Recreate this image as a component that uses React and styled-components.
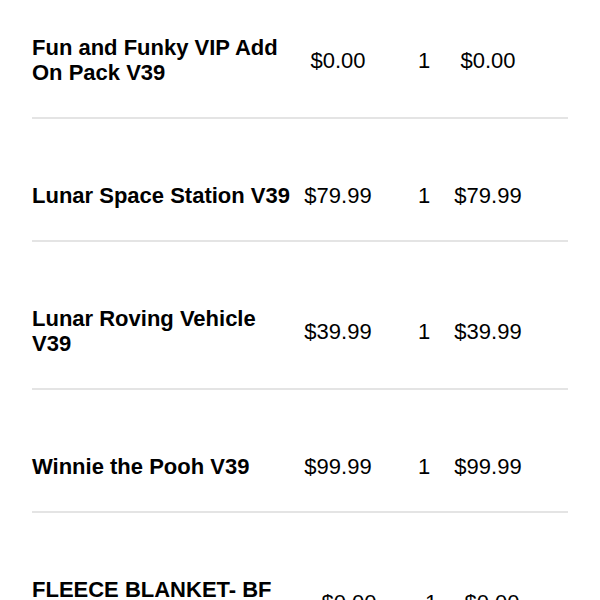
import React from 'react';
import styled, { createGlobalStyle } from 'styled-components';

const GlobalStyle = createGlobalStyle`
  html, body {
    margin: 0;
    padding: 0;
    background: #ffffff;
  }
  body {
    font-family: "Liberation Sans", Arial, Helvetica, sans-serif;
    color: #000000;
  }
`;

const List = styled.div`
  padding: 0 32px;
  overflow: hidden;
  height: 600px;
`;

const Row = styled.div`
  display: grid;
  grid-template-columns: ${(p) => p.$cols};
  align-items: center;
  padding: 64px 0 32px;
  border-bottom: 2px solid #e4e4e4;

  &:first-child {
    padding-top: 35px;
  }
`;

const Name = styled.div`
  font-size: 22px;
  font-weight: 700;
  line-height: 25px;
  padding-right: 4px;
`;

const Cell = styled.div`
  font-size: 22px;
  line-height: 25px;
  text-align: center;
  white-space: nowrap;
`;

const Qty = styled(Cell)`
  padding-left: 20px;
`;

const items = [
  { name: 'Fun and Funky VIP Add On Pack V39', price: '$0.00', qty: 1, total: '$0.00' },
  { name: 'Lunar Space Station V39', price: '$79.99', qty: 1, total: '$79.99' },
  { name: 'Lunar Roving Vehicle V39', price: '$39.99', qty: 1, total: '$39.99' },
  { name: 'Winnie the Pooh V39', price: '$99.99', qty: 1, total: '$99.99' },
  {
    name: 'FLEECE BLANKET- BF CHAMPIONS V39',
    price: '$0.00',
    qty: 1,
    total: '$0.00',
    cols: '279px 76px 68px 74px',
  },
];

const App = () => (
  <>
    <GlobalStyle />
    <List>
      {items.map((item) => (
        <Row key={item.name} $cols={item.cols || '268px 76px 76px 72px'}>
          <Name>{item.name}</Name>
          <Cell>{item.price}</Cell>
          <Qty>{item.qty}</Qty>
          <Cell>{item.total}</Cell>
        </Row>
      ))}
    </List>
  </>
);

export default App;
